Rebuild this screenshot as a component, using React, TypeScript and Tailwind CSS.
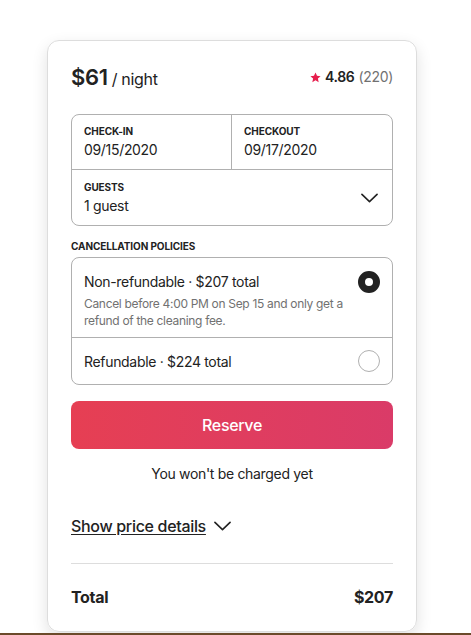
function Star() {
  return (
    <svg viewBox="0 0 32 32" className="w-[11px] h-[11px] fill-[#e61e4d]">
      <path d="M16 1.5l4.4 9.6 10.4 1.1-7.8 7 2.2 10.3L16 24.3l-9.2 5.2 2.2-10.3-7.8-7 10.4-1.1z" />
    </svg>
  );
}

function Chevron({ className }: { className?: string }) {
  return (
    <svg viewBox="0 0 18 10" className={className} fill="none" stroke="#222" strokeWidth={1.7} strokeLinecap="round" strokeLinejoin="round">
      <path d="M1 1.2l8 7.6 8-7.6" />
    </svg>
  );
}

function Radio({ checked }: { checked: boolean }) {
  if (checked) {
    return <span className="block w-[22px] h-[22px] rounded-full border-[7px] border-[#222] bg-white shrink-0" />;
  }
  return <span className="block w-[22px] h-[22px] rounded-full border border-[#b0b0b0] bg-white shrink-0" />;
}

export default function App() {
  return (
    <div className="w-[471px] h-[635px] bg-white flex flex-col font-['Inter',sans-serif] text-[#222] tracking-[-0.02em]">
      <div className="flex-1 pt-10 pl-[47px]">
        <div className="w-[370px] h-[592px] rounded-xl border border-[#dddddd] shadow-[0_6px_16px_rgba(0,0,0,0.12)] px-[23px] pt-[22px] flex flex-col">
          <div className="h-7 flex items-center justify-between">
            <div className="flex items-baseline gap-1 leading-none">
              <span className="text-[22px] font-semibold">$61</span>
              <span className="text-[16px]">/ night</span>
            </div>
            <div className="flex items-center gap-1 text-[14px] leading-none">
              <Star />
              <span className="font-semibold">4.86</span>
              <span className="text-[#717171]">(220)</span>
            </div>
          </div>

          <div className="mt-[23px] rounded-lg border border-[#b0b0b0]">
            <div className="grid grid-cols-2 border-b border-[#b0b0b0] h-[55px]">
              <div className="px-3 pt-[9px] border-r border-[#b0b0b0]">
                <div className="text-[10px] font-bold tracking-[-0.01em]">CHECK-IN</div>
                <div className="text-[14px] leading-5 mt-[1px]">09/15/2020</div>
              </div>
              <div className="px-3 pt-[9px]">
                <div className="text-[10px] font-bold tracking-[-0.01em]">CHECKOUT</div>
                <div className="text-[14px] leading-5 mt-[1px]">09/17/2020</div>
              </div>
            </div>
            <div className="flex items-center justify-between h-[55px] pl-3 pr-[14px]">
              <div className="pt-[1px]">
                <div className="text-[10px] font-bold tracking-[-0.01em]">GUESTS</div>
                <div className="text-[14px] leading-5 mt-[1px]">1 guest</div>
              </div>
              <Chevron className="w-[17px] h-[10px]" />
            </div>
          </div>

          <div className="mt-[13px] text-[10px] font-bold tracking-[-0.01em]">CANCELLATION POLICIES</div>
          <div className="mt-[3px] rounded-lg border border-[#b0b0b0]">
            <div className="flex justify-between px-3 pt-[14px] pb-2 border-b border-[#b0b0b0]">
              <div>
                <div className="text-[14px] leading-5">Non-refundable · $207 total</div>
                <div className="text-[12px] leading-[17px] text-[#717171] mt-[3px]">
                  Cancel before 4:00 PM on Sep 15 and only get a
                  <br />
                  refund of the cleaning fee.
                </div>
              </div>
              <div className="-mt-[1px]">
                <Radio checked />
              </div>
            </div>
            <div className="flex items-center justify-between px-3 h-[46px]">
              <div className="text-[14px]">Refundable · $224 total</div>
              <Radio checked={false} />
            </div>
          </div>

          <button className="mt-4 h-12 shrink-0 rounded-lg bg-linear-to-r from-[#e63f53] to-[#da3b68] text-white text-[16px] font-medium">
            Reserve
          </button>
          <div className="mt-[14px] text-center text-[14px]">You won't be charged yet</div>

          <div className="mt-[30px] flex items-center gap-2">
            <span className="text-[16px] font-medium underline underline-offset-2">Show price details</span>
            <Chevron className="w-[17px] h-[10px]" />
          </div>

          <div className="mt-[25px] border-t border-[#dddddd]" />
          <div className="mt-[21px] flex justify-between text-[16px] font-bold">
            <span>Total</span>
            <span>$207</span>
          </div>
        </div>
      </div>
      <div className="h-[2px] bg-[#6b4a2a]" />
    </div>
  );
}
